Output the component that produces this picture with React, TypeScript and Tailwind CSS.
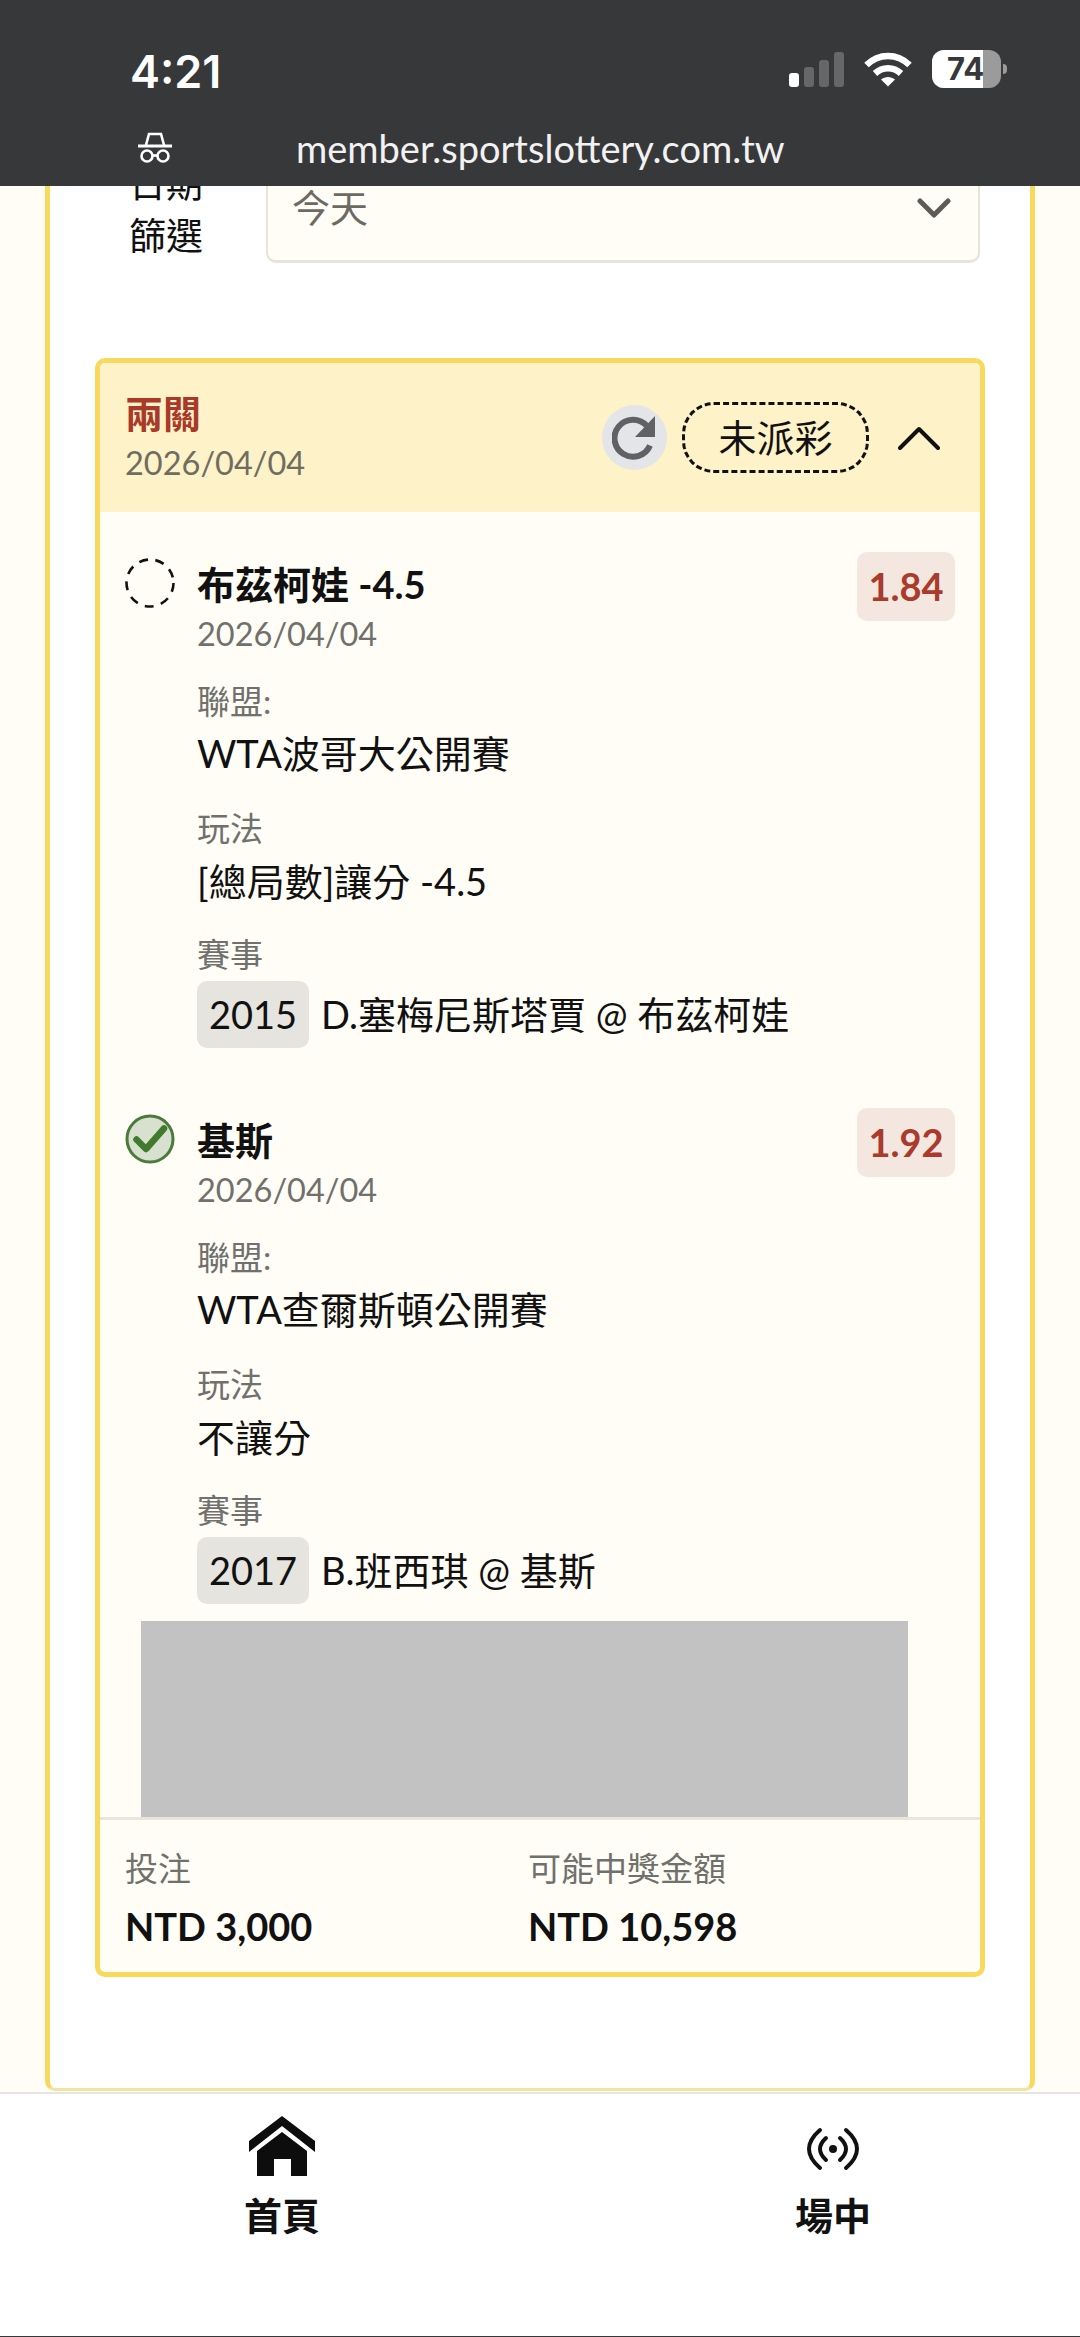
import React from 'react'

const FONT = "font-['Lato','Noto_Sans_CJK_TC',sans-serif]"

function SignalBars() {
  return (
    <div className="flex items-end gap-[5px]">
      <div className="w-[10px] h-[14px] rounded-[3px] bg-white" />
      <div className="w-[10px] h-[20px] rounded-[3px] bg-[#666769]" />
      <div className="w-[10px] h-[27px] rounded-[3px] bg-[#666769]" />
      <div className="w-[10px] h-[35px] rounded-[3px] bg-[#666769]" />
    </div>
  )
}

function Wifi() {
  return (
    <svg width="48" height="35" viewBox="0 0 48 35" fill="none" stroke="#fff" strokeWidth="6.5">
      <path d="M2.5 13C15 1 33 1 45.5 13" />
      <path d="M11 21.5C18.5 14.5 29.5 14.5 37 21.5" />
      <path d="M17 27.5L24 34.5L31 27.5C27 24 21 24 17 27.5Z" fill="#fff" stroke="none" />
    </svg>
  )
}

function Battery() {
  return (
    <div className="flex items-center gap-[2px]">
      <div className="relative w-[69px] h-[38px] rounded-[12px] bg-[#9b9b9b] overflow-hidden">
        <div className="w-[51px] h-full bg-white" />
        <span className="absolute left-[15px] top-0 h-full flex items-center text-[31px] font-bold text-[#37383a] font-['Inter',sans-serif]">74</span>
      </div>
      <div className="w-[4px] h-[10px] rounded-r-full bg-[#9b9b9b]" />
    </div>
  )
}

function Incognito() {
  return (
    <svg width="36" height="34" viewBox="0 0 36 34" fill="none" stroke="#fff" strokeWidth="2.6">
      <path d="M9 14L12 3H24L27 14" />
      <path d="M1 15H35" strokeWidth="3" />
      <circle cx="10" cy="25" r="5.5" />
      <circle cx="26" cy="25" r="5.5" />
      <path d="M15.5 24.5H20.5" />
    </svg>
  )
}

function PhoneHeader() {
  return (
    <header className="h-[186px] shrink-0 bg-[#37383a] text-white font-['Inter',sans-serif]">
      <div className="h-[123px] pt-[50px] pl-[130px] pr-[73px] flex justify-between items-start">
        <span className="text-[45px] leading-[44px] font-semibold">4:21</span>
        <div className="flex items-center gap-[20px]">
          <SignalBars />
          <Wifi />
          <Battery />
        </div>
      </div>
      <div className="flex items-center pl-[137px]">
        <Incognito />
        <span className="ml-[123px] text-[38px] leading-[50px] text-[#f2f2f2] font-['Lato','Noto_Sans_CJK_TC',sans-serif]">member.sportslottery.com.tw</span>
      </div>
    </header>
  )
}

function RefreshIcon() {
  return (
    <div className="w-[65px] h-[65px] rounded-full bg-[#e3e5e8] flex items-center justify-center">
      <svg width="46" height="46" viewBox="0 0 46 46" fill="none">
        <path d="M38 30.5A18.5 18.5 0 1 1 34.5 10.5" stroke="#5f6165" strokeWidth="6" />
        <path d="M43 1V22H23Z" fill="#5f6165" />
      </svg>
    </div>
  )
}

function DashedCircle() {
  return (
    <svg width="50" height="50" viewBox="0 0 50 50" fill="none">
      <circle cx="25" cy="25" r="23.5" stroke="#111" strokeWidth="2.6" strokeDasharray="9 7.5" />
    </svg>
  )
}

function CheckCircle() {
  return (
    <svg width="50" height="50" viewBox="0 0 50 50" fill="none">
      <circle cx="25" cy="25" r="23" fill="#d8e0cf" stroke="#4a7a3c" strokeWidth="3" />
      <path d="M11.5 25.5L21 35L39 14.5" stroke="#3f7a2d" strokeWidth="6.5" strokeLinecap="round" strokeLinejoin="round" />
    </svg>
  )
}

interface Leg {
  title: string
  date: string
  odds: string
  league: string
  play: string
  code: string
  match: string
  won: boolean
}

const LEGS: Leg[] = [
  { title: '布茲柯娃 -4.5', date: '2026/04/04', odds: '1.84', league: 'WTA波哥大公開賽', play: '[總局數]讓分 -4.5', code: '2015', match: 'D.塞梅尼斯塔賈 @ 布茲柯娃', won: false },
  { title: '基斯', date: '2026/04/04', odds: '1.92', league: 'WTA查爾斯頓公開賽', play: '不讓分', code: '2017', match: 'B.班西琪 @ 基斯', won: true },
]

function LegRow({ leg }: { leg: Leg }) {
  return (
    <div className="flex pl-[25px] pr-[25px]">
      <div className="w-[50px] shrink-0 mt-[6px]">{leg.won ? <CheckCircle /> : <DashedCircle />}</div>
      <div className="ml-[22px] flex-1">
        <div className="flex justify-between items-start">
          <div className="pt-[8px]">
            <div className="text-[38px] leading-[48px] font-bold text-[#111]">{leg.title}</div>
            <div className="mt-[4px] text-[32.5px] leading-[44px] text-[#70706c]">{leg.date}</div>
          </div>
          <div className="w-[98px] h-[69px] rounded-[10px] bg-[#f3e7df] flex items-center justify-center text-[38px] font-bold text-[#aa3a2b]">{leg.odds}</div>
        </div>
        <div className="mt-[23px] text-[33px] leading-[44px] text-[#70706c]">聯盟:</div>
        <div className="mt-[6px] text-[38px] leading-[48px] text-[#111]">{leg.league}</div>
        <div className="mt-[29px] text-[33px] leading-[44px] text-[#70706c]">玩法</div>
        <div className="mt-[7px] text-[38px] leading-[48px] text-[#111]">{leg.play}</div>
        <div className="mt-[27px] text-[33px] leading-[44px] text-[#70706c]">賽事</div>
        <div className="mt-[5px] flex items-center text-[38px] text-[#111]">
          <span className="w-[112px] h-[67px] rounded-[10px] bg-[#e6e4de] flex items-center justify-center">{leg.code}</span>
          <span className="ml-[12px]">{leg.match}</span>
        </div>
      </div>
    </div>
  )
}

function BetCard() {
  return (
    <section className="mt-[95px] border-[5px] border-[#f8d95e] rounded-[10px] overflow-hidden bg-[#fffdf6]">
      <div className="h-[149px] bg-[#fdf2c8] flex items-center justify-between pl-[25px] pr-[40px]">
        <div>
          <div className="text-[38px] leading-[46px] font-bold text-[#a93a2a]">兩關</div>
          <div className="mt-[5px] text-[32.5px] leading-[44px] text-[#6f6d5f]">2026/04/04</div>
        </div>
        <div className="flex items-center">
          <RefreshIcon />
          <div className="ml-[15px] w-[187px] h-[71px] rounded-[32px] border-[3px] border-dashed border-[#111] flex items-center justify-center text-[38px] text-[#111]">未派彩</div>
          <svg className="ml-[29px]" width="42" height="24" viewBox="0 0 42 24" fill="none" stroke="#111" strokeWidth="4" strokeLinecap="round" strokeLinejoin="round">
            <path d="M2 22L21 3L40 22" />
          </svg>
        </div>
      </div>
      <div className="h-[1305px] overflow-hidden pt-[40px]">
        <LegRow leg={LEGS[0]} />
        <div className="mt-[60px]"><LegRow leg={LEGS[1]} /></div>
        <div className="mt-[17px] ml-[41px] w-[767px] h-[200px] bg-[#c2c2c2]" />
      </div>
      <div className="border-t-[3px] border-[#e8e6df] h-[155px] pl-[25px] pt-[26px] flex">
        <div className="w-[403px]">
          <div className="text-[33px] leading-[44px] text-[#70706c]">投注</div>
          <div className="mt-[14px] text-[38px] leading-[44px] font-bold text-[#111]">NTD 3,000</div>
        </div>
        <div>
          <div className="text-[33px] leading-[44px] text-[#70706c]">可能中獎金額</div>
          <div className="mt-[14px] text-[38px] leading-[44px] font-bold text-[#111]">NTD 10,598</div>
        </div>
      </div>
    </section>
  )
}

function HomeIcon() {
  return (
    <svg width="66" height="60" viewBox="0 0 66 60" fill="#0d0d0d">
      <path d="M33 0L66 25V36L33 10L0 36V25Z" />
      <path d="M33 16L58 35V60H42V43H25V60H8V35Z" />
    </svg>
  )
}

function LiveIcon() {
  return (
    <svg width="56" height="48" viewBox="0 0 56 48" fill="none" stroke="#111" strokeWidth="4" strokeLinecap="round">
      <path d="M21 13Q9 24 21 35" />
      <path d="M35 13Q47 24 35 35" />
      <path d="M15 5Q-7 24 15 43" />
      <path d="M41 5Q63 24 41 43" />
      <circle cx="28" cy="24" r="4" fill="#111" stroke="none" />
    </svg>
  )
}

function BottomNav() {
  return (
    <nav className="h-[245px] shrink-0 bg-white border-t-[2px] border-[#e5e5e5] border-b-[1px] border-b-[#37383a] flex">
      <div className="w-[120px] ml-[222px] pt-[22px] flex flex-col items-center">
        <HomeIcon />
        <span className="mt-[15px] text-[38px] leading-[48px] font-semibold text-[#111]">首頁</span>
      </div>
      <div className="w-[120px] ml-[431px] pt-[31px] flex flex-col items-center">
        <LiveIcon />
        <span className="mt-[18px] text-[38px] leading-[48px] font-semibold text-[#111]">場中</span>
      </div>
    </nav>
  )
}

export default function App() {
  return (
    <div lang="zh-TW" className={`h-[2337px] w-[1080px] flex flex-col overflow-hidden bg-[#fffdf6] ${FONT}`}>
      <PhoneHeader />
      <main className="flex-1 min-h-0 overflow-hidden pl-[45px] pr-[45px]">
        <div className="-mt-[33px] bg-white border-x-[5px] border-b-[3px] border-x-[#f8d95e] border-b-[#f3e3a0] rounded-b-[10px] pl-[45px] pr-[45px] pb-[111px]">
          <div className="flex items-center">
            <div className="w-[76px] ml-[34px] shrink-0 pt-[3px] text-[37px] leading-[52px] text-[#111]">日期 篩選</div>
            <div className="ml-[61px] mr-[5px] flex-1 h-[110px] rounded-[10px] border-[2px] border-b-[3px] border-[#e7e4da] bg-[#fffdf6] flex items-center justify-between pl-[24px] pr-[27px]">
              <span className="text-[38px] text-[#6b6a63]">今天</span>
              <svg width="34" height="20" viewBox="0 0 34 20" fill="none" stroke="#5c5b55" strokeWidth="5" strokeLinecap="round" strokeLinejoin="round">
                <path d="M3 3L17 17L31 3" />
              </svg>
            </div>
          </div>
          <BetCard />
        </div>
      </main>
      <BottomNav />
    </div>
  )
}
